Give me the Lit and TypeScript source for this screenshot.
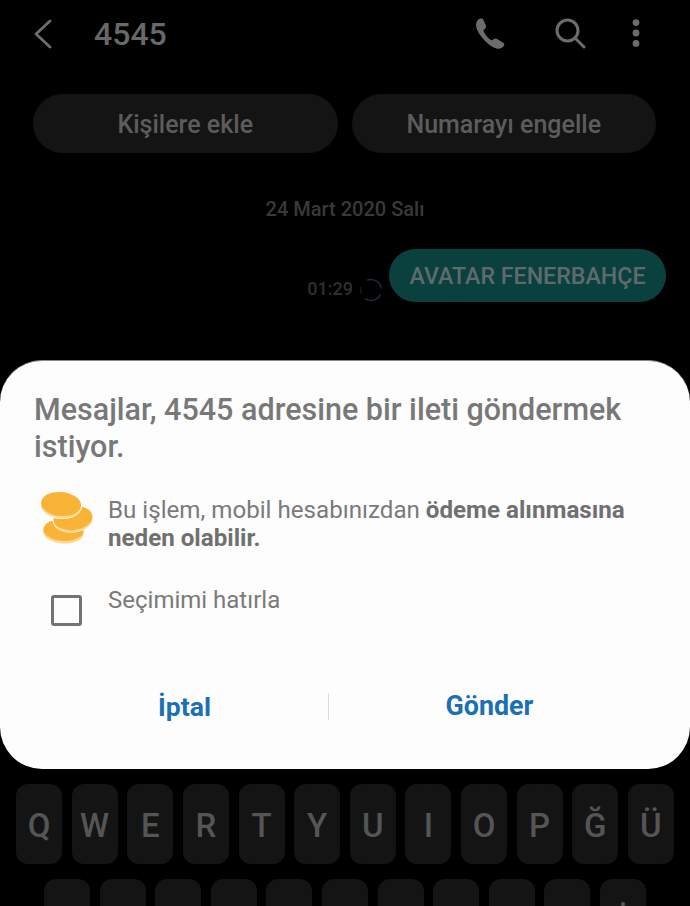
import { LitElement, html, css } from "lit";
import { customElement } from "lit/decorators.js";

const ROW1 = ["Q","W","E","R","T","Y","U","I","O","P","Ğ","Ü"];
const ROW2 = ["A","S","D","F","G","H","J","K","L","Ş","İ"];

@customElement("app-root")
export class AppRoot extends LitElement {
  static styles = css`
    :host { display: block; width: 690px; height: 906px; overflow: hidden; background: #000; font-family: Roboto, "Liberation Sans", sans-serif; }
    .page { display: flex; flex-direction: column; height: 906px; overflow: hidden; }
    .top { display: flex; align-items: center; height: 68px; padding: 0 50px 0 33px; color: #686868; flex: none; }
    .back { width: 20px; height: 30px; margin-right: 41px; }
    .title { font-size: 32px; font-weight: 500; flex: 1; }
    .acts { display: flex; align-items: center; }
    .acts svg { display: block; }
    .phone { margin-right: 50px; margin-top: -2px; }
    .search { margin-right: 46px; margin-top: -1px; }
    .dots { margin-top: -2px; }
    .chips { display: flex; gap: 14px; padding: 26px 34px 0 33px; flex: none; }
    .chip { flex: 1; height: 59px; border-radius: 30px; background: #141414; color: #5c5c5c; display: flex; align-items: center; justify-content: center; font-size: 25px; font-weight: 500; padding-top: 2px; box-sizing: border-box; }
    .date { text-align: center; color: #393939; font-size: 20px; font-weight: 500; margin-top: 45px; height: 22px; line-height: 22px; flex: none; }
    .msg { display: flex; justify-content: flex-end; align-items: flex-end; padding: 0 24px 0 0; margin-top: 29px; height: 53px; flex: none; }
    .time { color: #303030; font-size: 18px; font-weight: 500; line-height: 22px; margin-right: 6px; margin-bottom: 2px; }
    .spin { margin-right: 6px; display: block; }
    .bubble { width: 277px; height: 53px; border-radius: 27px; background: #0a403e; color: #5f6b6b; font-size: 23.2px; font-weight: 500; display: flex; align-items: center; justify-content: center; box-sizing: border-box; }
    .dialog { flex: none; margin-top: 58px; height: 409px; box-sizing: border-box; background: #fdfdfd; border-radius: 42px; border-top: 1px solid #8a8a8a; padding: 30px 34px 0 34px; color: #757575; display: flex; flex-direction: column; }
    h1 { margin: 0; font-size: 30.5px; line-height: 37px; font-weight: 500; color: #787878; }
    .warn { display: flex; margin-top: 25px; align-items: flex-start; height: 72px; }
    .coin { width: 60px; height: 58px; margin-left: 6px; margin-right: 8px; margin-top: -1px; flex: none; display: block; }
    .warn p { margin: 0; font-size: 24.15px; line-height: 28px; color: #7a7a7a; white-space: nowrap; padding-top: 6px; }
    .warn b { font-weight: 700; color: #707070; }
    .remember { display: flex; align-items: flex-start; margin-top: 17px; height: 60px; }
    .box { border: 3.5px solid #737373; border-radius: 3px; box-sizing: border-box; margin: 16px 0 0 17px; flex: none; width: 31px; height: 31px; }
    .remember span { font-size: 24px; line-height: 28px; margin-left: 26px; margin-top: 7px; color: #7a7a7a; }
    .btns { display: flex; align-items: center; margin: 47px -34px 0; height: 40px; }
    .btn { text-align: center; color: #1a6fb5; font-weight: 700; flex: none; box-sizing: border-box; }
    .btn.l { font-size: 26.5px; width: 328px; padding-left: 41px; }
    .btn.r { font-size: 26.8px; width: 321px; }
    .sep { width: 1px; height: 27px; background: #dcdcdc; flex: none; }
    .kbd { flex: none; margin-top: 15px; display: flex; flex-direction: column; gap: 15px; }
    .row { display: flex; justify-content: space-between; padding: 0 16px; height: 80px; }
    .row.two { padding: 0 44px; }
    .key { width: 46px; height: 80px; border-radius: 12px; background: #141414; color: #555; font-size: 33px; font-weight: 500; display: flex; align-items: flex-start; justify-content: center; line-height: 33px; padding-top: 25px; box-sizing: border-box; }
  `;

  render() {
    return html`<div class="page">
      <div class="top">
        <svg class="back" viewBox="0 0 20 30" fill="none" stroke="#6e6e6e" stroke-width="2.8" stroke-linecap="round" stroke-linejoin="round"><path d="M17 2 L3 15 L17 28"/></svg>
        <div class="title">4545</div>
        <div class="acts">
          <svg class="phone" width="30" height="31" viewBox="0 0 30 31" fill="#6c6c6c"><path d="M3 2 C5 0 7.5 0.2 8.5 2 L10.8 7.2 C11.4 8.8 11 10 9.8 11 L8.4 12.2 C9.6 16.4 13.4 20.8 17 22.6 L18.4 21.2 C19.6 20.2 21 20.2 22.2 21 L27.8 24.4 C29.6 25.6 29.8 27.2 28.4 28.6 L26.6 30 C24.8 31.2 21.8 31 18.8 29.4 C11.6 25.6 4.2 17.4 1.6 10.4 C0.6 7 1 4 3 2 Z"/></svg>
          <svg class="search" width="31" height="31" viewBox="0 0 31 31" fill="none" stroke="#6c6c6c" stroke-width="3" stroke-linecap="round"><circle cx="12.5" cy="12.5" r="10.5"/><path d="M20.5 20.5 L29 29"/></svg>
          <svg class="dots" width="8" height="28" viewBox="0 0 8 28" fill="#6c6c6c"><circle cx="4" cy="3.6" r="3.4"/><circle cx="4" cy="14" r="3.4"/><circle cx="4" cy="24.4" r="3.4"/></svg>
        </div>
      </div>
      <div class="chips">
        <div class="chip">Kişilere ekle</div>
        <div class="chip">Numarayı engelle</div>
      </div>
      <div class="date">24 Mart 2020 Salı</div>
      <div class="msg">
        <span class="time">01:29</span>
        <svg class="spin" width="24" height="24" viewBox="0 0 24 24" fill="none" stroke="#1f2c3a" stroke-width="1.5"><path d="M8 2.3 A10.5 10.5 0 0 1 22.3 10.5"/><path d="M21.5 16.5 A10.5 10.5 0 0 1 6 20.6"/><path d="M2.4 16 A10.5 10.5 0 0 1 2 9" stroke="#111820"/></svg>
        <div class="bubble">AVATAR FENERBAHÇE</div>
      </div>
      <div class="dialog">
        <h1>Mesajlar, 4545 adresine bir ileti göndermek istiyor.</h1>
        <div class="warn">
          <svg class="coin" viewBox="0 0 60 58">
            <g transform="rotate(3 23.5 41.5)"><ellipse cx="23.5" cy="43" rx="20.5" ry="11.5" fill="#fbd993"/><ellipse cx="23.5" cy="41" rx="20" ry="11" fill="#f9b437"/></g>
            <g transform="rotate(-7 33 29.5)"><ellipse cx="33" cy="30" rx="20.5" ry="13.5" fill="#fff"/><ellipse cx="33" cy="31" rx="19.5" ry="12.5" fill="#fbd993"/><ellipse cx="33" cy="29" rx="19.5" ry="12" fill="#f9b437"/></g>
            <g transform="rotate(5 21 16)"><ellipse cx="21" cy="16" rx="21" ry="14" fill="#fff"/><ellipse cx="21" cy="17" rx="20" ry="12.5" fill="#fbd993"/><ellipse cx="21" cy="15" rx="20" ry="12" fill="#f9b437"/></g>
          </svg>
          <p>Bu işlem, mobil hesabınızdan <b>ödeme alınmasına</b><br><b>neden olabilir.</b></p>
        </div>
        <div class="remember"><div class="box"></div><span>Seçimimi hatırla</span></div>
        <div class="btns">
          <div class="btn l">İptal</div>
          <div class="sep"></div>
          <div class="btn r">Gönder</div>
        </div>
      </div>
      <div class="kbd">
        <div class="row">${ROW1.map((k) => html`<div class="key">${k}</div>`)}</div>
        <div class="row two">${ROW2.map((k) => html`<div class="key">${k}</div>`)}</div>
      </div>
    </div>`;
  }
}
